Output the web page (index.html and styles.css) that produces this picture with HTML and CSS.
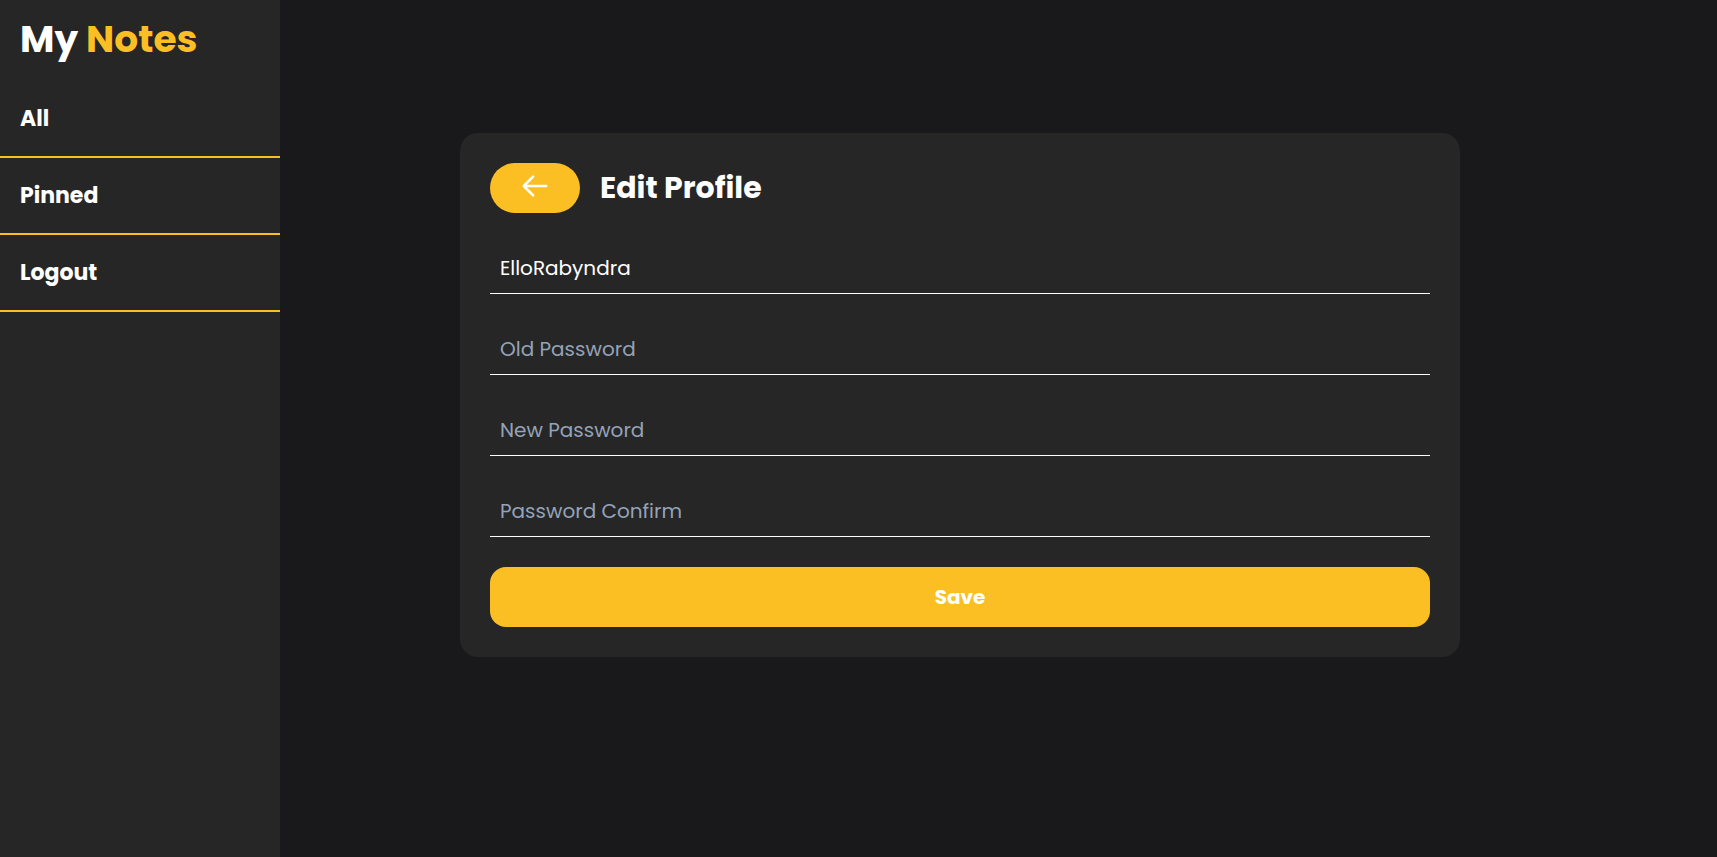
FILE: index.html
```html
<!DOCTYPE html>
<html lang="en">
<head>
<meta charset="utf-8">
<title>My Notes - Edit Profile</title>
<link rel="stylesheet" href="styles.css">
</head>
<body>
<div class="app">
  <aside class="sidebar">
    <div class="logo"><span class="logo-my">My</span> <span class="logo-notes">Notes</span></div>
    <nav class="nav">
      <a class="nav-item" href="#">All</a>
      <a class="nav-item" href="#">Pinned</a>
      <a class="nav-item" href="#">Logout</a>
    </nav>
  </aside>
  <main class="main">
    <section class="card">
      <header class="card-header">
        <button class="back-btn" type="button" aria-label="Back">
          <svg class="back-icon" viewBox="0 0 24 24" fill="none" stroke="currentColor" stroke-width="2" stroke-linecap="round" stroke-linejoin="round"><path d="M10.5 19.5 3 12m0 0 7.5-7.5M3 12h18"/></svg>
        </button>
        <h1 class="card-title">Edit Profile</h1>
      </header>
      <form class="form">
        <input class="field" type="text" value="ElloRabyndra">
        <input class="field" type="password" placeholder="Old Password">
        <input class="field" type="password" placeholder="New Password">
        <input class="field" type="password" placeholder="Password Confirm">
        <button class="save-btn" type="button">Save</button>
      </form>
    </section>
  </main>
</div>
</body>
</html>
```
FILE: styles.css
```css
* { box-sizing: border-box; }
html, body { margin: 0; padding: 0; height: 100%; }
body {
  font-family: "Poppins", "Inter", "Open Sans", sans-serif;
  background: #19191b;
  color: #fff;
}
.app { display: flex; height: 100vh; }
.sidebar {
  width: 280px;
  flex-shrink: 0;
  background: #262626;
}
.logo {
  height: 81px;
  padding: 14px 0 0 20px;
  font-size: 37.5px;
  font-weight: 700;
  line-height: 50px;
}
.logo-my { color: #fff; }
.logo-notes { color: #fbbf24; }
.nav { display: flex; flex-direction: column; }
.nav-item {
  display: flex;
  align-items: center;
  height: 77px;
  padding: 0 20px;
  border-bottom: 2px solid #fbbf24;
  color: #fff;
  text-decoration: none;
  font-size: 22px;
  font-weight: 700;
}
.main {
  flex: 1;
  padding: 133px 0 0 180px;
}
.card {
  width: 1000px;
  background: #262626;
  border-radius: 18px;
  padding: 30px;
  display: flex;
  flex-direction: column;
  gap: 30px;
}
.card-header {
  display: flex;
  align-items: center;
  gap: 20px;
}
.back-btn {
  width: 90px;
  height: 50px;
  border: none;
  border-radius: 25px;
  background: #fbbf24;
  color: #fff;
  display: flex;
  align-items: center;
  justify-content: center;
  padding: 0 0 4px 0;
  cursor: pointer;
}
.back-icon { width: 30px; height: 30px; }
.card-title {
  margin: 0;
  font-size: 30px;
  font-weight: 700;
}
.form { display: flex; flex-direction: column; gap: 30px; }
.field {
  height: 51px;
  width: 100%;
  background: transparent;
  border: none;
  border-bottom: 1px solid #fff;
  color: #fff;
  font-family: inherit;
  font-size: 20px;
  padding: 0 10px;
  outline: none;
}
.field::placeholder { color: #94a3b8; }
.save-btn {
  height: 60px;
  width: 100%;
  border: none;
  border-radius: 16px;
  background: #fbbf24;
  color: #fff;
  font-family: inherit;
  font-size: 20px;
  font-weight: 700;
  cursor: pointer;
}
```
